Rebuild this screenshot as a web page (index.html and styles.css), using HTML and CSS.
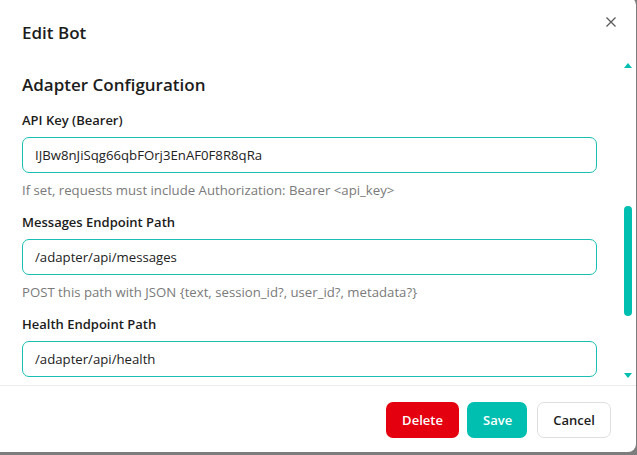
FILE: index.html
```html
<!DOCTYPE html>
<html lang="en">
<head>
<meta charset="utf-8">
<title>Edit Bot</title>
<link rel="stylesheet" href="styles.css">
</head>
<body>
<div class="modal">
  <header class="modal-header">
    <h1 class="modal-title">Edit Bot</h1>
    <button class="close-btn" aria-label="Close">
      <svg width="10" height="10" viewBox="0 0 10 10"><path d="M0.5 0.5 L9.5 9.5 M9.5 0.5 L0.5 9.5" stroke="#5a5a5a" stroke-width="1.3" fill="none"/></svg>
    </button>
  </header>
  <div class="modal-body">
    <div class="content">
      <h2 class="section-title">Adapter Configuration</h2>
      <div class="field">
        <label class="field-label">API Key (Bearer)</label>
        <div class="input">IJBw8nJiSqg66qbFOrj3EnAF0F8R8qRa</div>
        <div class="help">If set, requests must include Authorization: Bearer &lt;api_key&gt;</div>
      </div>
      <div class="field">
        <label class="field-label">Messages Endpoint Path</label>
        <div class="input">/adapter/api/messages</div>
        <div class="help">POST this path with JSON {text, session_id?, user_id?, metadata?}</div>
      </div>
      <div class="field">
        <label class="field-label">Health Endpoint Path</label>
        <div class="input">/adapter/api/health</div>
      </div>
    </div>
    <div class="scrollbar">
      <svg class="arrow" width="8" height="5" viewBox="0 0 8 5"><path d="M4 0 L8 5 L0 5 Z" fill="#00bfb0"/></svg>
      <div class="track"><div class="thumb"></div></div>
      <svg class="arrow" width="8" height="5" viewBox="0 0 8 5"><path d="M0 0 L8 0 L4 5 Z" fill="#00bfb0"/></svg>
    </div>
  </div>
  <footer class="modal-footer">
    <button class="btn btn-danger">Delete</button>
    <button class="btn btn-primary">Save</button>
    <button class="btn btn-default">Cancel</button>
  </footer>
</div>
</body>
</html>
```

FILE: styles.css
```css
html, body {
  margin: 0;
  padding: 0;
  height: 100%;
}
body {
  background: #7d7d7d;
  font-family: "Open Sans", "Noto Sans", sans-serif;
  color: #1c1c1c;
  overflow: hidden;
  position: relative;
}
.modal {
  position: absolute;
  left: -10px;
  top: -3px;
  width: 646px;
  height: 455px;
  background: #fff;
  border-radius: 8px;
  display: flex;
  flex-direction: column;
  box-sizing: border-box;
}
.modal-header {
  height: 61px;
  flex: none;
  display: flex;
  align-items: center;
  justify-content: space-between;
  padding: 0 20px 0 32px;
  box-sizing: border-box;
}
.modal-title {
  margin: 10px 0 0 0;
  font-size: 17px;
  font-weight: 600;
  line-height: 24px;
}
.close-btn {
  border: 0;
  background: transparent;
  padding: 0;
  width: 10px;
  height: 10px;
  display: flex;
  margin-top: -12px;
}
.modal-body {
  flex: 1;
  min-height: 0;
  display: flex;
}
.content {
  flex: 1;
  overflow: hidden;
  padding: 15px 25px 0 32px;
}
.section-title {
  margin: 0 0 13px 0;
  font-size: 17px;
  font-weight: 600;
  line-height: 24px;
}
.field {
  margin-bottom: 12px;
}
.field-label {
  display: block;
  font-size: 13px;
  font-weight: 600;
  line-height: 20px;
  margin-bottom: 7px;
}
.input {
  height: 36px;
  box-sizing: border-box;
  border: 1px solid #19bfb2;
  border-radius: 7px;
  padding: 0 12px;
  display: flex;
  align-items: center;
  font-size: 13.2px;
  color: #222;
}
.help {
  margin-top: 7px;
  font-size: 13.2px;
  line-height: 20px;
  color: #7a7a7a;
}
.scrollbar {
  width: 12px;
  margin-right: 2px;
  display: flex;
  flex-direction: column;
  align-items: center;
  padding: 5px 0 7px;
}
.arrow {
  flex: none;
}
.track {
  flex: 1;
  width: 8px;
  padding: 0;
}
.thumb {
  width: 8px;
  height: 110px;
  margin-top: 138px;
  background: #00bfb0;
  border-radius: 4px;
}
.modal-footer {
  flex: none;
  border-top: 1px solid #ececec;
  display: flex;
  justify-content: flex-end;
  gap: 8px;
  padding: 16px 25px 14px;
}
.btn {
  height: 36px;
  border-radius: 7px;
  font-family: inherit;
  font-size: 13px;
  font-weight: 600;
  padding: 0 15px;
  border: 1px solid transparent;
  cursor: pointer;
}
.btn-danger {
  background: #e4000f;
  color: #fff;
  width: 73px;
}
.btn-primary {
  background: #00bfb0;
  color: #fff;
  width: 60px;
}
.btn-default {
  background: #fff;
  border-color: #dedede;
  color: #1c1c1c;
  width: 74px;
  margin-left: 2px;
}
```
